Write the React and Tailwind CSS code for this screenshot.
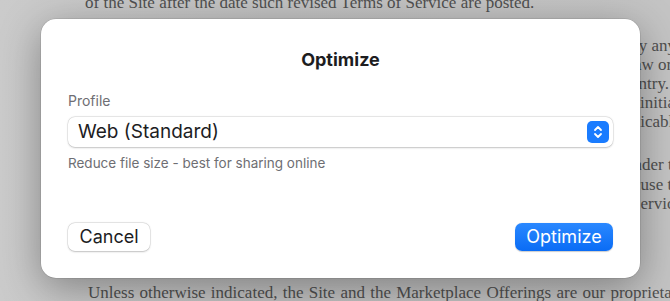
import React from "react";

const serif = { fontFamily: '"Liberation Serif", serif' };

function Stepper() {
  return (
    <div className="flex h-[22px] w-[22px] items-center justify-center rounded-[5px] bg-[#1a7cff]">
      <svg width="10" height="16" viewBox="0 0 10 16" fill="none" stroke="white" strokeWidth="1.8" strokeLinecap="round" strokeLinejoin="round">
        <path d="M2 6 L5 3 L8 6" />
        <path d="M2 10 L5 13 L8 10" />
      </svg>
    </div>
  );
}

export default function App() {
  return (
    <div className="relative h-[301px] w-[670px] overflow-hidden bg-[linear-gradient(90deg,#cbcbcb_0%,#c2c2c2_40%,#c4c4c4_100%)]">
      <div className="flex flex-col text-[17px] leading-[19px] text-[#505050]" style={serif}>
        <div className="mt-[-7px] ml-[85px] whitespace-nowrap">of the Site after the date such revised Terms of Service are posted.</div>
        <div className="mt-[24px] flex flex-col whitespace-nowrap">
          <div className="pl-[634px]">ly any</div>
          <div className="pl-[634px]">aw or</div>
          <div className="pl-[614px]">country.</div>
          <div className="pl-[640px]">initial</div>
          <div className="pl-[611px]">applicable</div>
        </div>
        <div className="mt-[24px] flex flex-col leading-[19.5px] whitespace-nowrap">
          <div className="pl-[625px]">under t</div>
          <div className="pl-[633px]">cuse t</div>
          <div className="pl-[631px]">Service</div>
        </div>
        <div className="mt-[69px] ml-[88px] whitespace-nowrap [word-spacing:1px]">Unless otherwise indicated, the Site and the Marketplace Offerings are our proprietary</div>
      </div>

      <div
        className="absolute left-[41px] top-[19px] flex h-[259px] w-[599px] flex-col rounded-[15px] bg-white px-[27px] shadow-[0_10px_40px_rgba(0,0,0,0.35),0_0_0_0.5px_rgba(0,0,0,0.15)]"
        style={{ fontFamily: 'Inter, "Noto Sans", sans-serif' }}
      >
        <div className="mt-[30px] text-center text-[18px] font-bold leading-[22px] text-[#1d1d1f]">Optimize</div>
        <div className="mt-[21px] text-[14px] leading-[17px] text-[#6e6e73]">Profile</div>
        <div className="mt-[8px] flex h-[30px] items-center justify-between rounded-[7px] bg-white pl-[10px] pr-[4px] shadow-[0_0.5px_2px_rgba(0,0,0,0.2),0_0_0_0.5px_rgba(0,0,0,0.1)]">
          <span className="text-[19px] leading-[22px] text-[#1d1d1f]">Web (Standard)</span>
          <Stepper />
        </div>
        <div className="mt-[8px] text-[13.5px] leading-[16px] text-[#6e6e73]">Reduce file size - best for sharing online</div>
        <div className="mt-auto mb-[27px] flex items-center justify-between">
          <button className="h-[28px] w-[82px] rounded-[7px] bg-white text-[18px] leading-[20px] text-[#1d1d1f] shadow-[0_0.5px_2px_rgba(0,0,0,0.2),0_0_0_0.5px_rgba(0,0,0,0.12)]">Cancel</button>
          <button className="h-[28px] w-[98px] rounded-[7px] bg-[linear-gradient(180deg,#2a88ff,#0a6cf5)] text-[18px] leading-[20px] text-white shadow-[0_0.5px_1px_rgba(0,0,0,0.2)]">Optimize</button>
        </div>
      </div>
    </div>
  );
}
